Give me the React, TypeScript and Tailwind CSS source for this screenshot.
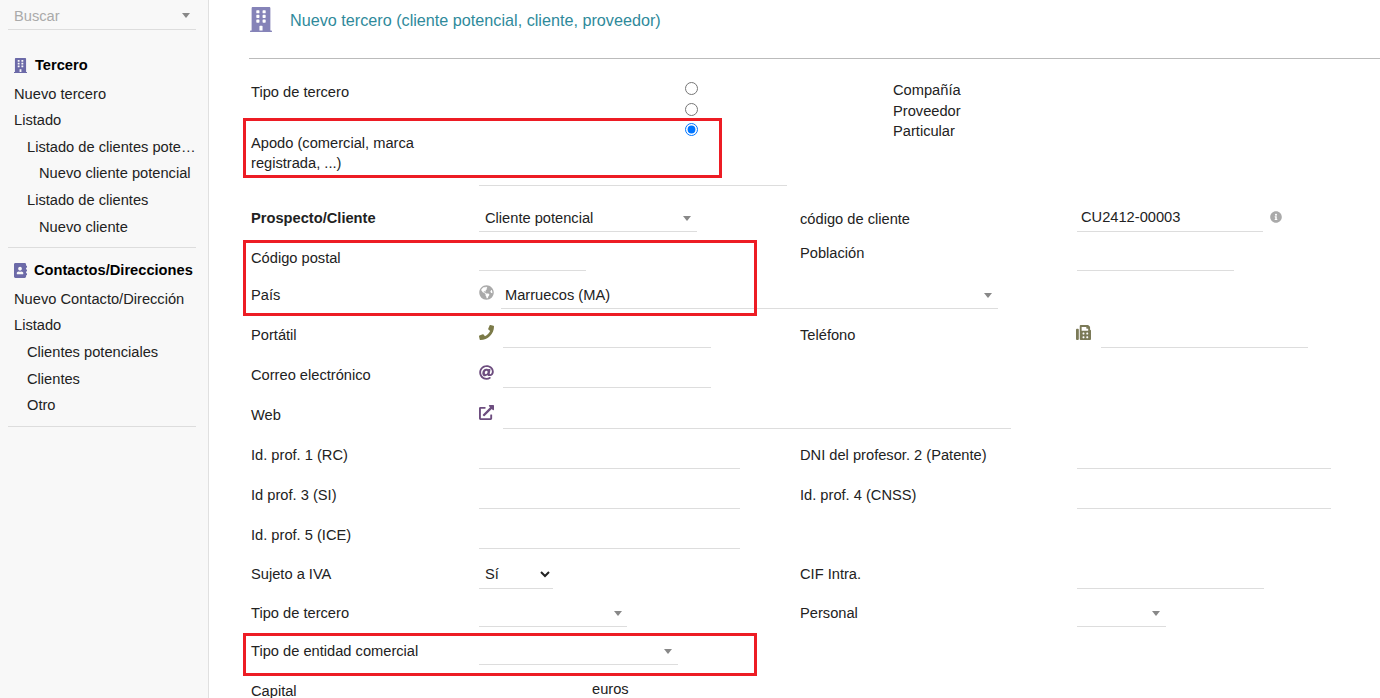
import type { ReactNode } from "react";
import { FaAddressBook, FaAt, FaBuilding, FaExternalLinkAlt, FaFax, FaGlobeAmericas, FaInfoCircle, FaPhone } from "react-icons/fa";

const Caret = () => <span className="block h-0 w-0 border-x-[4px] border-t-[5px] border-x-transparent border-t-[#888]" />;

// one form row: the height decides where the next row sits
const Row = ({ h, children }: { h: string; children: ReactNode }) => (
  <div className={`flex items-end ${h}`}>{children}</div>
);

const Label = ({ w, pb, bold, children }: { w: string; pb: string; bold?: boolean; children: ReactNode }) => (
  <div className={`shrink-0 leading-5 ${w} ${pb} ${bold ? "font-bold" : ""}`}>{children}</div>
);

const Line = ({ w, children }: { w: string; children?: ReactNode }) => (
  <div className={`flex h-[26px] shrink-0 items-center justify-between border-b border-[#ddd] ${w}`}>{children}</div>
);

const SideItem = ({ pl, h, children }: { pl: string; h: string; children: ReactNode }) => (
  <div className={`truncate leading-5 ${pl} ${h}`}>{children}</div>
);

export default function App() {
  return (
    <div className="flex h-[698px] overflow-hidden bg-white font-['Liberation_Sans',Arial,sans-serif] text-[14.67px] text-[#222]">
      {/* sidebar */}
      <aside className="w-[209px] shrink-0 border-r border-[#e0e0e0] bg-[#f8f8f8] pl-2 pr-3 pt-[4px]">
        <div className="flex h-[26px] w-[188px] items-center justify-between border-b border-[#ddd] pb-[2px] pl-[6px] pr-[6px] text-[#aaa]">
          Buscar
          <Caret />
        </div>
        <div className="mt-[25px] flex h-[20px] items-center pl-[6px] font-bold text-black">
          <FaBuilding className="mr-[8px] h-[15px] w-[13px] text-[#6c6aa8]" />
          Tercero
        </div>
        <div className="mt-[9px] w-[188px]">
          <SideItem pl="pl-[6px]" h="h-[26px]">Nuevo tercero</SideItem>
          <SideItem pl="pl-[6px]" h="h-[27px]">Listado</SideItem>
          <SideItem pl="pl-[19px]" h="h-[26px]">Listado de clientes potenciales</SideItem>
          <SideItem pl="pl-[31px]" h="h-[27px]">Nuevo cliente potencial</SideItem>
          <SideItem pl="pl-[19px]" h="h-[27px]">Listado de clientes</SideItem>
          <SideItem pl="pl-[31px]" h="h-[27px]">Nuevo cliente</SideItem>
        </div>
        <div className="mt-[3px] w-[188px] border-b border-[#ddd]" />
        <div className="mt-[12px] flex h-[20px] items-center pl-[6px] font-bold text-black">
          <FaAddressBook className="mr-[7px] h-[15px] w-[13px] text-[#6c6aa8]" />
          Contactos/Direcciones
        </div>
        <div className="mt-[9px] w-[188px]">
          <SideItem pl="pl-[6px]" h="h-[26px]">Nuevo Contacto/Dirección</SideItem>
          <SideItem pl="pl-[6px]" h="h-[27px]">Listado</SideItem>
          <SideItem pl="pl-[19px]" h="h-[27px]">Clientes potenciales</SideItem>
          <SideItem pl="pl-[19px]" h="h-[26px]">Clientes</SideItem>
          <SideItem pl="pl-[19px]" h="h-[26px]">Otro</SideItem>
        </div>
        <div className="mt-[5px] w-[188px] border-b border-[#ddd]" />
      </aside>

      {/* main */}
      <main className="relative min-w-0 flex-1 pl-[40px]">
        <div className="flex h-[59px] items-start border-b border-[#bbb]">
          <FaBuilding className="ml-[1px] mt-[7px] h-[25px] w-[22px] text-[#8583b8]" />
          <div className="ml-[18px] mt-[10px] text-[16.2px] leading-5 text-[#2f8a9b]">
            Nuevo tercero (cliente potencial, cliente, proveedor)
          </div>
        </div>

        <div className="pl-[2px]">
          <div className="flex h-[74px] items-start pt-[22px]">
            <div className="mt-[1px] w-[434px] shrink-0 leading-5">Tipo de tercero</div>
            <div className="mt-[1px] flex w-[208px] shrink-0 flex-col gap-[7.5px]">
              <input type="radio" name="tipo" className="m-0 h-[13px] w-[13px]" />
              <input type="radio" name="tipo" className="m-0 h-[13px] w-[13px]" />
              <input type="radio" name="tipo" defaultChecked className="m-0 h-[13px] w-[13px]" />
            </div>
            <div className="-mt-[1px] leading-[20.5px]">
              <div>Compañía</div>
              <div>Proveedor</div>
              <div>Particular</div>
            </div>
          </div>

          <Row h="h-[53px]">
            <Label w="w-[228px]" pb="pb-[13px]">
              <span className="block w-[190px]">Apodo (comercial, marca registrada, ...)</span>
            </Label>
            <Line w="w-[308px]" />
          </Row>

          <Row h="h-[46px]">
            <Label w="w-[228px]" pb="pb-[4px]" bold>Prospecto/Cliente</Label>
            <Line w="w-[218px]">
              <span className="pb-[1px] pl-[6px]">Cliente potencial</span>
              <span className="mr-[6px]"><Caret /></span>
            </Line>
            <div className="w-[103px] shrink-0" />
            <Label w="w-[277px]" pb="pb-[3px]">código de cliente</Label>
            <Line w="w-[186px]">
              <span className="pb-[4px] pl-[4px]">CU2412-00003</span>
            </Line>
            <FaInfoCircle className="mb-[9px] ml-[7px] h-[12px] w-[12px] text-[#aaa]" />
          </Row>

          <Row h="h-[39px]">
            <Label w="w-[228px]" pb="pb-[3px]">Código postal</Label>
            <Line w="w-[107px]" />
            <div className="w-[214px] shrink-0" />
            <Label w="w-[277px]" pb="pb-[8px]">Población</Label>
            <Line w="w-[157px]" />
          </Row>

          <Row h="h-[38px]">
            <Label w="w-[228px]" pb="pb-[4px]">País</Label>
            <FaGlobeAmericas className="mb-[9px] mr-[7px] h-[15px] w-[15px] text-[#aaa]" />
            <Line w="w-[497px]">
              <span className="pb-[2px] pl-[4px]">Marruecos (MA)</span>
              <span className="mr-[6px]"><Caret /></span>
            </Line>
          </Row>

          <Row h="h-[39px]">
            <Label w="w-[228px]" pb="pb-[3px]">Portátil</Label>
            <FaPhone className="mb-[8px] mr-[9px] h-[15px] w-[15px] text-[#7b7a48]" />
            <Line w="w-[208px]" />
            <div className="w-[89px] shrink-0" />
            <Label w="w-[276px]" pb="pb-[3px]">Teléfono</Label>
            <FaFax className="mb-[8px] mr-[10px] h-[15px] w-[15px] text-[#7b7a58]" />
            <Line w="w-[207px]" />
          </Row>

          <Row h="h-[40px]">
            <Label w="w-[228px]" pb="pb-[3px]">Correo electrónico</Label>
            <FaAt className="mb-[8px] mr-[9px] h-[15px] w-[15px] text-[#6d4d7f]" />
            <Line w="w-[208px]" />
          </Row>

          <Row h="h-[41px]">
            <Label w="w-[228px]" pb="pb-[4px]">Web</Label>
            <FaExternalLinkAlt className="mb-[9px] mr-[9px] h-[15px] w-[15px] text-[#6d4d7f]" />
            <Line w="w-[508px]" />
          </Row>

          <Row h="h-[40px]">
            <Label w="w-[228px]" pb="pb-[4px]">Id. prof. 1 (RC)</Label>
            <Line w="w-[261px]" />
            <div className="w-[60px] shrink-0" />
            <Label w="w-[277px]" pb="pb-[4px]">DNI del profesor. 2 (Patente)</Label>
            <Line w="w-[254px]" />
          </Row>

          <Row h="h-[40px]">
            <Label w="w-[228px]" pb="pb-[4px]">Id prof. 3 (SI)</Label>
            <Line w="w-[261px]" />
            <div className="w-[60px] shrink-0" />
            <Label w="w-[277px]" pb="pb-[4px]">Id. prof. 4 (CNSS)</Label>
            <Line w="w-[254px]" />
          </Row>

          <Row h="h-[40px]">
            <Label w="w-[228px]" pb="pb-[4px]">Id. prof. 5 (ICE)</Label>
            <Line w="w-[261px]" />
          </Row>

          <Row h="h-[40px]">
            <Label w="w-[228px]" pb="pb-[5px]">Sujeto a IVA</Label>
            <div className="h-[26px] w-[74px] shrink-0 border-b border-[#ddd]">
              <select className="h-[21px] w-full bg-white pl-[2px] outline-none" defaultValue="si">
                <option value="si">Sí</option>
              </select>
            </div>
            <div className="w-[247px] shrink-0" />
            <Label w="w-[277px]" pb="pb-[5px]">CIF Intra.</Label>
            <Line w="w-[187px]" />
          </Row>

          <Row h="h-[38px]">
            <Label w="w-[228px]" pb="pb-[4px]">Tipo de tercero</Label>
            <Line w="w-[148px]">
              <span />
              <span className="mr-[5px]"><Caret /></span>
            </Line>
            <div className="w-[173px] shrink-0" />
            <Label w="w-[277px]" pb="pb-[4px]">Personal</Label>
            <Line w="w-[89px]">
              <span />
              <span className="mr-[6px]"><Caret /></span>
            </Line>
          </Row>

          <Row h="h-[38px]">
            <Label w="w-[228px]" pb="pb-[4px]">Tipo de entidad comercial</Label>
            <Line w="w-[199px]">
              <span />
              <span className="mr-[6px]"><Caret /></span>
            </Line>
          </Row>

          <Row h="h-[40px]">
            <Label w="w-[341px]" pb="pb-[4px]">Capital</Label>
            <Label w="w-[60px]" pb="pb-[6px]">euros</Label>
          </Row>
        </div>

        {/* red marks drawn over the screenshot */}
        <div className="absolute left-[34px] top-[118px] h-[60px] w-[479px] border-[3px] border-[#ed1c24]" />
        <div className="absolute left-[34px] top-[240px] h-[76px] w-[514px] border-[3px] border-[#ed1c24]" />
        <div className="absolute left-[34px] top-[633px] h-[43px] w-[514px] border-[3px] border-[#ed1c24]" />
      </main>
    </div>
  );
}
